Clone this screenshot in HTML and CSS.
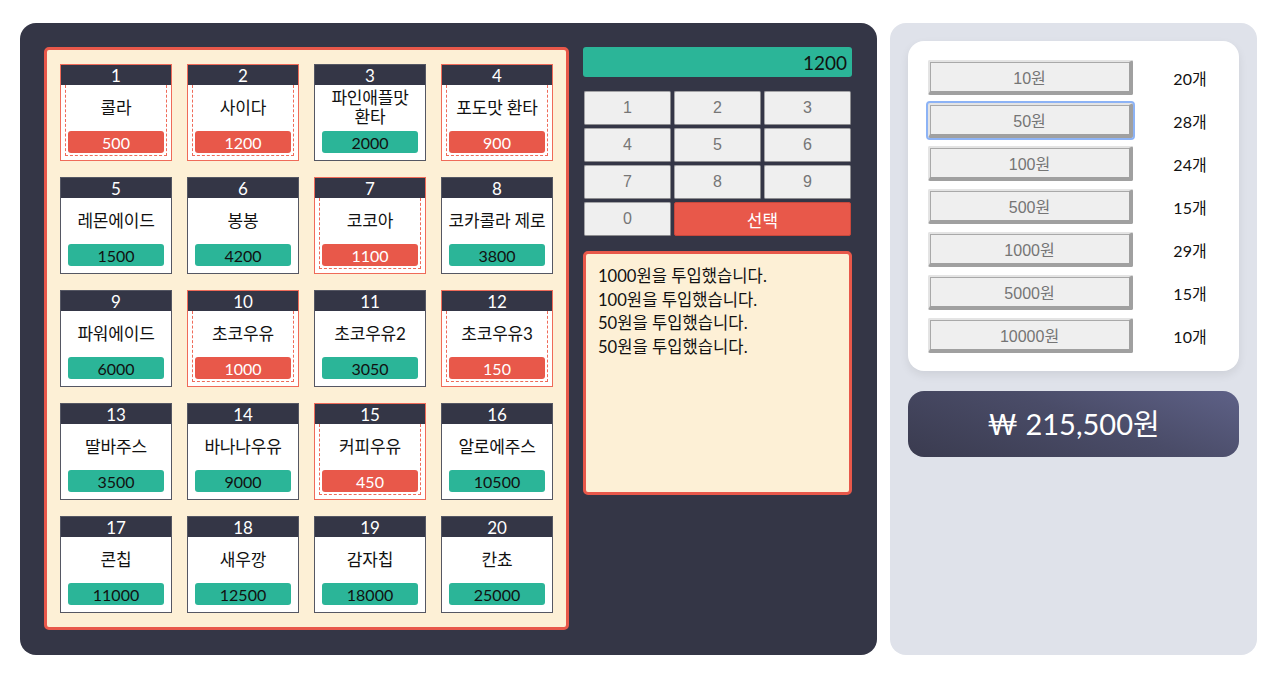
FILE: index.html
```html
<!DOCTYPE html>
<html lang="ko">
<head>
<meta charset="utf-8">
<title>자판기</title>
<link rel="stylesheet" href="styles.css">
</head>
<body>
<div class="machine">
  <div class="products">
    <div class="card on"><div class="num">1</div><div class="body"><div class="name">콜라</div><div class="price">500</div></div></div>
    <div class="card on"><div class="num">2</div><div class="body"><div class="name">사이다</div><div class="price">1200</div></div></div>
    <div class="card"><div class="num">3</div><div class="body"><div class="name">파인애플맛<br>환타</div><div class="price">2000</div></div></div>
    <div class="card on"><div class="num">4</div><div class="body"><div class="name">포도맛 환타</div><div class="price">900</div></div></div>
    <div class="card"><div class="num">5</div><div class="body"><div class="name">레몬에이드</div><div class="price">1500</div></div></div>
    <div class="card"><div class="num">6</div><div class="body"><div class="name">봉봉</div><div class="price">4200</div></div></div>
    <div class="card on"><div class="num">7</div><div class="body"><div class="name">코코아</div><div class="price">1100</div></div></div>
    <div class="card"><div class="num">8</div><div class="body"><div class="name">코카콜라 제로</div><div class="price">3800</div></div></div>
    <div class="card"><div class="num">9</div><div class="body"><div class="name">파워에이드</div><div class="price">6000</div></div></div>
    <div class="card on"><div class="num">10</div><div class="body"><div class="name">초코우유</div><div class="price">1000</div></div></div>
    <div class="card"><div class="num">11</div><div class="body"><div class="name">초코우유2</div><div class="price">3050</div></div></div>
    <div class="card on"><div class="num">12</div><div class="body"><div class="name">초코우유3</div><div class="price">150</div></div></div>
    <div class="card"><div class="num">13</div><div class="body"><div class="name">딸바주스</div><div class="price">3500</div></div></div>
    <div class="card"><div class="num">14</div><div class="body"><div class="name">바나나우유</div><div class="price">9000</div></div></div>
    <div class="card on"><div class="num">15</div><div class="body"><div class="name">커피우유</div><div class="price">450</div></div></div>
    <div class="card"><div class="num">16</div><div class="body"><div class="name">알로에주스</div><div class="price">10500</div></div></div>
    <div class="card"><div class="num">17</div><div class="body"><div class="name">콘칩</div><div class="price">11000</div></div></div>
    <div class="card"><div class="num">18</div><div class="body"><div class="name">새우깡</div><div class="price">12500</div></div></div>
    <div class="card"><div class="num">19</div><div class="body"><div class="name">감자칩</div><div class="price">18000</div></div></div>
    <div class="card"><div class="num">20</div><div class="body"><div class="name">칸쵸</div><div class="price">25000</div></div></div>
  </div>
  <div class="control">
    <div class="display">1200</div>
    <div class="keypad">
      <button class="key">1</button>
      <button class="key">2</button>
      <button class="key">3</button>
      <button class="key">4</button>
      <button class="key">5</button>
      <button class="key">6</button>
      <button class="key">7</button>
      <button class="key">8</button>
      <button class="key">9</button>
      <button class="key">0</button>
      <button class="key select">선택</button>
    </div>
    <div class="log">
      <div>1000원을 투입했습니다.</div>
      <div>100원을 투입했습니다.</div>
      <div>50원을 투입했습니다.</div>
      <div>50원을 투입했습니다.</div>
    </div>
  </div>
</div>
<div class="wallet">
  <div class="coins">
    <button class="coin">10원</button><span class="count">20개</span>
    <button class="coin focus">50원</button><span class="count">28개</span>
    <button class="coin">100원</button><span class="count">24개</span>
    <button class="coin">500원</button><span class="count">15개</span>
    <button class="coin">1000원</button><span class="count">29개</span>
    <button class="coin">5000원</button><span class="count">15개</span>
    <button class="coin">10000원</button><span class="count">10개</span>
  </div>
  <div class="total">₩ 215,500원</div>
</div>
</body>
</html>
```

FILE: styles.css
```css
* { box-sizing: border-box; }

body {
  margin: 0;
  padding: 23px 23px 0 20px;
  display: flex;
  gap: 13px;
  background: #ffffff;
  font-family: Lato, "Noto Sans CJK KR", sans-serif;
  color: #111;
}

.machine {
  width: 857px;
  height: 632px;
  background: #343646;
  border-radius: 16px;
  padding: 24px 25px 24px 24px;
  display: flex;
  gap: 14px;
  align-items: flex-start;
}

.products {
  width: 525px;
  height: 583px;
  background: #fdf0d6;
  border: 3px solid #e8584a;
  border-radius: 5px;
  padding: 14px 13px;
  display: grid;
  grid-template-columns: repeat(4, 112px);
  grid-auto-rows: 97px;
  column-gap: 15px;
  row-gap: 16px;
}

.card {
  border: 1px solid #555763;
  background: #fff;
  display: flex;
  flex-direction: column;
}

.card.on { border-color: #ef6b59; }

.num {
  height: 20px;
  background: #343646;
  color: #fff;
  text-align: center;
  font-size: 17px;
  line-height: 21px;
}

.body {
  flex: 1;
  margin: 0 4px 4px;
  border: 1px solid transparent;
  border-top: none;
  padding: 0 2px 2px;
  display: flex;
  flex-direction: column;
}

.card.on .body { border-color: #ef6b59; border-style: dashed; border-top: none; }

.name {
  flex: 1;
  display: flex;
  align-items: center;
  justify-content: center;
  text-align: center;
  white-space: nowrap;
  margin: 0 -6px;
  font-size: 17px;
  line-height: 19px;
  padding-bottom: 2px;
  letter-spacing: -0.2px;
}

.price {
  height: 22px;
  border-radius: 3px;
  background: #2bb598;
  color: #111;
  text-align: center;
  font-size: 16px;
  line-height: 23px;
}

.card.on .price { background: #e8584a; color: #fff; }

.control {
  width: 269px;
  display: flex;
  flex-direction: column;
}

.display {
  height: 30px;
  background: #2bb598;
  border-radius: 3px;
  text-align: right;
  padding-right: 5px;
  font-size: 19px;
  line-height: 31px;
  color: #111;
}

.keypad {
  margin-top: 14px;
  margin-left: 1px;
  display: grid;
  grid-template-columns: repeat(3, 87px);
  grid-auto-rows: 34px;
  column-gap: 3px;
  row-gap: 3px;
}

.key {
  margin: 0;
  background: #efefef;
  border: 1px solid #a3a3a6;
  border-bottom-color: #8d8d90;
  border-right-color: #8d8d90;
  border-radius: 2px;
  font-family: "Liberation Sans", "Noto Sans CJK KR", sans-serif;
  font-size: 16px;
  color: #767676;
  padding: 0;
}

.key.select {
  grid-column: span 2;
  background: #e8584a;
  border-color: #c9473b;
  color: #fff;
  font-family: "Noto Sans CJK KR", sans-serif;
  font-size: 17px;
}

.log {
  margin-top: 15px;
  height: 244px;
  background: #fdf0d6;
  border: 3px solid #e8584a;
  border-radius: 5px;
  padding: 11px 12px;
  font-size: 16.6px;
  line-height: 23.5px;
  color: #111;
}

.wallet {
  width: 367px;
  height: 632px;
  background: #dfe2ea;
  border-radius: 16px;
  padding: 18px;
  display: flex;
  flex-direction: column;
  gap: 20px;
}

.coins {
  background: #fff;
  border-radius: 16px;
  box-shadow: 0 4px 10px rgba(0, 0, 0, 0.08);
  padding: 19px 20px 18px 20px;
  display: grid;
  grid-template-columns: 205px 1fr;
  grid-auto-rows: 35px;
  row-gap: 8px;
  align-items: center;
}

.coin {
  margin: 0;
  height: 35px;
  background: #efefef;
  border-style: solid;
  border-width: 2px 4px 4px 2px;
  border-color: #e4e4e4 #a0a0a0 #a0a0a0 #e4e4e4;
  box-shadow: inset 1px 1px 0 #a9a9a9;
  border-radius: 2px;
  font-family: "Liberation Sans", "Noto Sans CJK KR", sans-serif;
  font-size: 16px;
  color: #757575;
  padding: 0;
}

.coin.focus {
  outline: 2px solid #8db3f5;
  outline-offset: 0;
}

.count {
  text-align: center;
  padding-left: 28px;
  font-size: 16px;
  color: #111;
}

.total {
  height: 66px;
  border-radius: 16px;
  background: linear-gradient(20deg, #3a3b4f 0%, #4a4c68 55%, #5e6187 100%);
  color: #fff;
  text-align: center;
  font-size: 29px;
  line-height: 66px;
}
```
